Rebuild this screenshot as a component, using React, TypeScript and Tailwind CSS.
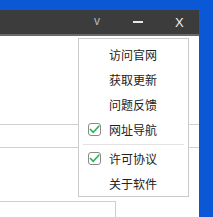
import React from "react";

function Check() {
  return (
    <span className="w-[13px] h-[13px] border border-[#8a8a8a] rounded-[3px] flex items-center justify-center bg-white">
      <svg width="11" height="11" viewBox="0 0 11 11">
        <path d="M1.5 5.5 L4.3 8.3 L9.8 2.2" fill="none" stroke="#2fb45a" strokeWidth="1.7" strokeLinecap="round" strokeLinejoin="round" />
      </svg>
    </span>
  );
}

function Item({ label, checked }: { label: string; checked?: boolean }) {
  return (
    <div className="h-[25px] flex items-center">
      <div className="w-[30px] flex justify-end pr-[8px]">{checked ? <Check /> : null}</div>
      <span className="text-[12px] leading-none text-[#222]">{label}</span>
    </div>
  );
}

export default function App() {
  return (
    <div
      className="w-[213px] h-[217px] bg-[#0a58d6] overflow-hidden relative"
      style={{ fontFamily: '"Noto Sans CJK SC", "Noto Sans", sans-serif' }}
    >
      <div className="mt-[10px] w-[199px] h-[207px] bg-white flex flex-col">
        <div className="h-[26px] bg-[#3c3c3c] border-b-2 border-[#6a6a6a] flex items-center shrink-0">
          <span className="ml-[94px] w-[8px] text-[#b8b8b8] text-[12px] leading-none -mt-[2px]" style={{ fontFamily: '"Liberation Sans", sans-serif' }}>v</span>
          <span className="ml-[31px] w-[10px] h-[1.5px] bg-[#e8e8e8]" />
          <span className="ml-[32px] text-[#f0f0f0] text-[13px] leading-none" style={{ fontFamily: '"Liberation Sans", sans-serif' }}>X</span>
        </div>
        <div className="flex-1 flex flex-col">
          <div className="h-[88px]" />
          <div className="h-px bg-[#d0d0d0]" />
          <div className="h-[22px]" />
          <div className="h-px bg-[#d0d0d0]" />
          <div className="h-[53px]" />
          <div className="w-[116px] flex-1 border-t border-r border-[#cfcfcf]" />
        </div>
      </div>
      <div className="absolute left-[78px] top-[38px] w-[111px] h-[159px] bg-white border border-[#cacaca] flex flex-col pt-[3px]">
        <Item label="访问官网" />
        <Item label="获取更新" />
        <Item label="问题反馈" />
        <Item label="网址导航" checked />
        <div className="h-[4px] flex items-center px-[4px]">
          <div className="h-px w-full bg-[#e2e2e2]" />
        </div>
        <Item label="许可协议" checked />
        <Item label="关于软件" />
      </div>
    </div>
  );
}
